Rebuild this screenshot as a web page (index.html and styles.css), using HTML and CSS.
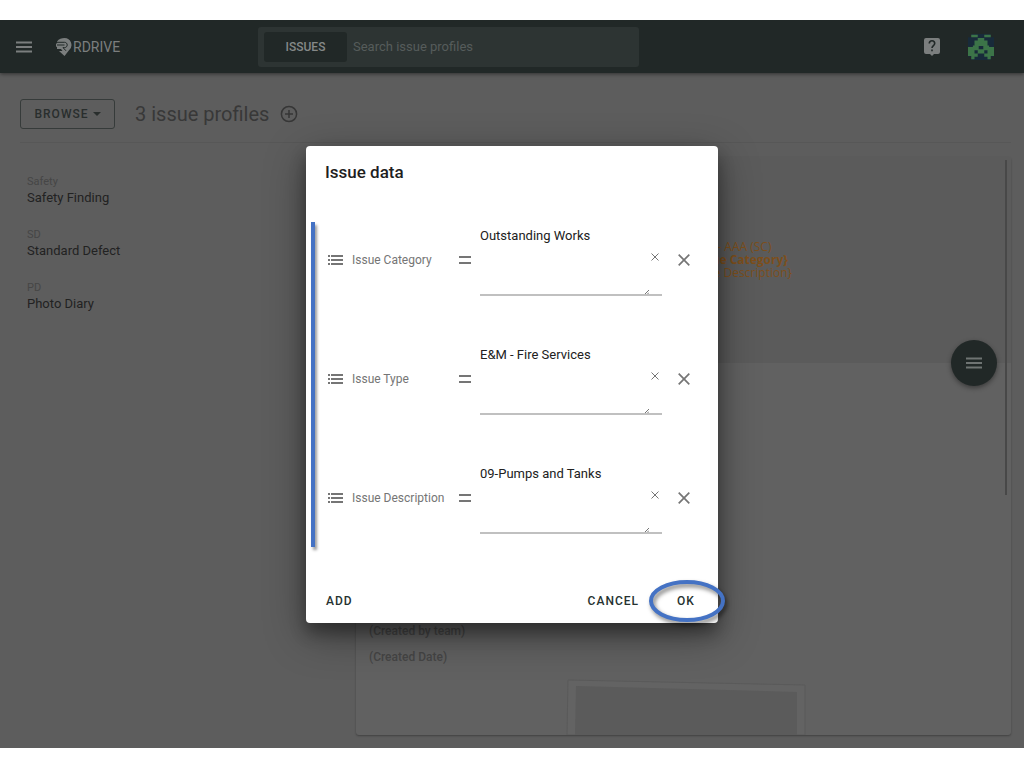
FILE: index.html
```html
<!DOCTYPE html>
<html lang="en">
<head>
    <meta charset="utf-8">
    <meta name="viewport" content="width=device-width, initial-scale=1">
    <title>RDrive - Issues</title>
    <link rel="stylesheet" href="styles.css">
</head>
<body>
    <div class="app">
        <header class="topbar">
            <div class="topbar-left">
                <button class="icon-btn" type="button" aria-label="Menu">
                    <svg width="16" height="12" viewBox="0 0 16 12"><path d="M0 1.500h16M0 6h16M0 10.500h16" stroke="currentColor" stroke-width="1.800"/></svg>
                </button>
                <a class="logo" href="#">
                    <svg width="16" height="18" viewBox="0 0 16 18">
                        <path d="M1 3.500C3 .8 5.500 0 8.500 0a7 7 0 0 1 4.500 12.300L8.500 18 3 13h3.500l-1.500-2H1V8.800H0V5.500h1z" fill="currentColor"/>
                        <path d="M0 4.300h8.500c3.600 0 3.600 5.300 0 5.300H7l3 3.200M1 7h7.500" fill="none" stroke="#212827" stroke-width="1"/>
                    </svg>
                    <span>RDRIVE</span>
                </a>
            </div>
            <form class="search">
                <button class="search-tab" type="button">ISSUES</button>
                <input class="search-input" type="text" placeholder="Search issue profiles" aria-label="Search issue profiles">
            </form>
            <div class="topbar-right">
                <button class="icon-btn" type="button" aria-label="Help">
                    <svg width="16" height="18" viewBox="0 0 16 18">
                        <path d="M2 0h12a2 2 0 0 1 2 2v12a2 2 0 0 1-2 2h-4l-2 2-2-2H2a2 2 0 0 1-2-2V2a2 2 0 0 1 2-2z" fill="currentColor"/>
                        <path d="M5.300 5.500c0-3.600 5.400-3.600 5.400 0 0 2-2.700 2.200-2.700 4.500M8 11.500v1.800" fill="none" stroke="#212827" stroke-width="1.600"/>
                    </svg>
                </button>
                <button class="icon-btn" type="button" aria-label="Account">
                    <svg width="26" height="26" viewBox="0 0 8 8">
                        <path d="M1 0h6v1h1v6H7v1H1V7H0V1h1z" fill="#182a3a"/>
                        <path d="M1 .2h2v.8H1zM5 .2h2v.8H5zM3 1.200h2V2h1v1.500h.5V4H8v2.800H7v1H6V7H5V6h1V5H5v1H3V5H2v1h1v1H2v.8H1v-1H0V4h1.500v-.5H2V2h1zM3.300 3.700v1h1.400v-1z" fill="#3c7448" fill-rule="evenodd"/>
                    </svg>
                </button>
            </div>
        </header>

        <main class="content">
            <div class="toolbar">
                <button class="browse" type="button">BROWSE
                    <svg width="8" height="4" viewBox="0 0 8 4"><path d="M0 0h8L4 4z" fill="currentColor"/></svg>
                </button>
                <h1 class="page-title">3 issue profiles</h1>
                <button class="icon-btn add-profile" type="button" aria-label="Add profile">
                    <svg width="18" height="18" viewBox="0 0 18 18" fill="none" stroke="currentColor" stroke-width="1.500"><circle cx="9" cy="9" r="7.600"/><path d="M9 5v8M5 9h8"/></svg>
                </button>
            </div>

            <div class="columns">
                <ul class="profiles">
                    <li><span>Safety</span><a href="#">Safety Finding</a></li>
                    <li><span>SD</span><a href="#">Standard Defect</a></li>
                    <li><span>PD</span><a href="#">Photo Diary</a></li>
                </ul>

                <section class="preview">
                    <div class="preview-head">
                        <p>II - AAA (SC)</p>
                        <p><b>{Issue Category}</b></p>
                        <p>{Issue Description}</p>
                    </div>
                    <div class="preview-body">
                        <p>(Created by team)</p>
                        <p>(Created Date)</p>
                        <svg class="photo" width="244" height="56" viewBox="0 0 244 56">
                            <path d="M4 1L241 6V56H3z" fill="#636363" stroke="#5a5a5a"/>
                            <path d="M12 7L233 13V56H11z" fill="#5b5b5b"/>
                        </svg>
                    </div>
                    <div class="scrollbar"></div>
                    <button class="fab" type="button" aria-label="Actions">
                        <svg width="16" height="12" viewBox="0 0 16 12"><path d="M0 1.500h16M0 6h16M0 10.500h16" stroke="currentColor" stroke-width="1.800"/></svg>
                    </button>
                </section>
            </div>
        </main>

        <div class="overlay">
            <div class="dialog" role="dialog" aria-labelledby="dialog-title">
                <h2 id="dialog-title" class="dialog-title">Issue data</h2>

                <div class="rows">
                    <div class="row">
                        <svg class="list-icon" width="15" height="10" viewBox="0 0 15 10"><path d="M0 1h2M0 5h2M0 9h2M3 1h12M3 5h12M3 9h12" stroke="currentColor" stroke-width="1.800"/></svg>
                        <label for="category">Issue Category</label>
                        <svg class="equals" width="12" height="8" viewBox="0 0 12 8"><path d="M0 1h12M0 7h12" stroke="currentColor" stroke-width="1.800"/></svg>
                        <div class="field">
                            <textarea id="category">Outstanding Works</textarea>
                            <button class="clear" type="button" aria-label="Clear"><svg width="8" height="8" viewBox="0 0 8 8"><path d="M.5.5l7 7M7.500.5l-7 7" stroke="currentColor"/></svg></button>
                            <svg class="grip" width="4" height="4" viewBox="0 0 4 4"><path d="M0 4l4-4M2.500 4L4 2.500" stroke="currentColor"/></svg>
                        </div>
                        <button class="remove" type="button" aria-label="Remove"><svg width="12" height="12" viewBox="0 0 12 12"><path d="M.7.7l10.600 10.600M11.300.7L.7 11.300" stroke="currentColor" stroke-width="1.700"/></svg></button>
                    </div>
                    <div class="row">
                        <svg class="list-icon" width="15" height="10" viewBox="0 0 15 10"><path d="M0 1h2M0 5h2M0 9h2M3 1h12M3 5h12M3 9h12" stroke="currentColor" stroke-width="1.800"/></svg>
                        <label for="type">Issue Type</label>
                        <svg class="equals" width="12" height="8" viewBox="0 0 12 8"><path d="M0 1h12M0 7h12" stroke="currentColor" stroke-width="1.800"/></svg>
                        <div class="field">
                            <textarea id="type">E&amp;M - Fire Services</textarea>
                            <button class="clear" type="button" aria-label="Clear"><svg width="8" height="8" viewBox="0 0 8 8"><path d="M.5.5l7 7M7.500.5l-7 7" stroke="currentColor"/></svg></button>
                            <svg class="grip" width="4" height="4" viewBox="0 0 4 4"><path d="M0 4l4-4M2.500 4L4 2.500" stroke="currentColor"/></svg>
                        </div>
                        <button class="remove" type="button" aria-label="Remove"><svg width="12" height="12" viewBox="0 0 12 12"><path d="M.7.7l10.600 10.600M11.300.7L.7 11.300" stroke="currentColor" stroke-width="1.700"/></svg></button>
                    </div>
                    <div class="row">
                        <svg class="list-icon" width="15" height="10" viewBox="0 0 15 10"><path d="M0 1h2M0 5h2M0 9h2M3 1h12M3 5h12M3 9h12" stroke="currentColor" stroke-width="1.800"/></svg>
                        <label for="description">Issue Description</label>
                        <svg class="equals" width="12" height="8" viewBox="0 0 12 8"><path d="M0 1h12M0 7h12" stroke="currentColor" stroke-width="1.800"/></svg>
                        <div class="field">
                            <textarea id="description">09-Pumps and Tanks</textarea>
                            <button class="clear" type="button" aria-label="Clear"><svg width="8" height="8" viewBox="0 0 8 8"><path d="M.5.5l7 7M7.500.5l-7 7" stroke="currentColor"/></svg></button>
                            <svg class="grip" width="4" height="4" viewBox="0 0 4 4"><path d="M0 4l4-4M2.500 4L4 2.500" stroke="currentColor"/></svg>
                        </div>
                        <button class="remove" type="button" aria-label="Remove"><svg width="12" height="12" viewBox="0 0 12 12"><path d="M.7.7l10.600 10.600M11.300.7L.7 11.300" stroke="currentColor" stroke-width="1.700"/></svg></button>
                    </div>
                    <div class="mark-bar"></div>
                </div>

                <div class="actions">
                    <button class="text-btn" type="button">ADD</button>
                    <button class="text-btn cancel" type="button">CANCEL</button>
                    <button class="text-btn ok" type="button">OK
                        <svg class="mark-ring" width="78" height="44" viewBox="0 0 78 44"><ellipse cx="39" cy="22" rx="36" ry="19" fill="none" stroke="#4472c4" stroke-width="4"/></svg>
                    </button>
                </div>
            </div>
        </div>
    </div>
</body>
</html>
```

FILE: styles.css
```css
* {
    box-sizing: border-box;
    margin: 0;
    padding: 0;
}

body {
    padding: 20px 0;
    background: #fff;
    font-family: Roboto, "Liberation Sans", sans-serif;
    font-size: 13px;
    line-height: 16px;
}

button, input, textarea {
    font: inherit;
    color: inherit;
    border: 0;
    background: none;
}

a {
    color: inherit;
    text-decoration: none;
}

svg {
    display: block;
}

.app {
    position: relative;
    display: flex;
    flex-direction: column;
    height: calc(100vh - 40px);
    min-height: 560px;
    background: #5d5d5d;
    overflow: hidden;
}

/* top bar */

.topbar {
    display: flex;
    align-items: center;
    flex: none;
    height: 53px;
    padding: 0 30px 0 16px;
    background: #212827;
    color: #7b7e7e;
    box-shadow: 0 1px 4px rgba(0, 0, 0, 0.5);
}

.topbar-left {
    display: flex;
    align-items: center;
    gap: 24px;
    flex: 0 0 242px;
}

.logo {
    display: flex;
    align-items: center;
    gap: 1px;
    font-size: 14px;
    color: #7b7e7e;
}

.search {
    display: flex;
    flex: 0 1 381px;
    height: 40px;
    padding: 5px 6px;
    border-radius: 3px;
    background: #2d3433;
}

.search-tab {
    width: 83px;
    border-radius: 3px;
    background: #212827;
    font-size: 12px;
    font-weight: 500;
    color: #858888;
}

.search-input {
    flex: 1;
    min-width: 0;
    padding: 0 6px;
}

.search-input::placeholder {
    color: #565c5b;
}

.topbar-right {
    display: flex;
    align-items: center;
    gap: 28px;
    margin-left: auto;
}

/* page */

.content {
    display: flex;
    flex-direction: column;
    flex: 1;
    min-height: 0;
    padding: 0 13px 13px 20px;
}

.toolbar {
    display: flex;
    align-items: center;
    flex: none;
    height: 70px;
    padding-top: 12px;
    border-bottom: 1px solid #575757;
    color: #363636;
}

.browse {
    display: flex;
    align-items: center;
    justify-content: center;
    gap: 4px;
    width: 95px;
    height: 30px;
    margin-right: 20px;
    border: 1px solid #363b3a;
    border-radius: 3px;
    font-size: 12px;
    font-weight: 500;
    letter-spacing: 1px;
    color: #292e2d;
}

.page-title {
    margin-right: 11px;
    font-size: 20px;
    font-weight: 400;
    line-height: 24px;
    color: #383838;
}

.columns {
    display: flex;
    flex: 1;
    min-height: 0;
    padding-top: 14px;
}

.profiles {
    flex: 0 0 336px;
    padding: 17px 7px;
    list-style: none;
    color: #222;
}

.profiles li {
    display: flex;
    flex-direction: column;
    height: 53px;
}

.profiles span {
    font-size: 11px;
    color: #464646;
}

.preview {
    position: relative;
    display: flex;
    flex-direction: column;
    flex: 1;
    border-radius: 3px;
    background: #616161;
    box-shadow: 0 1px 2px rgba(0, 0, 0, 0.3);
}

.preview-head {
    display: flex;
    flex-direction: column;
    justify-content: center;
    height: 206px;
    padding: 0 0 2px 112px;
    background: #5b5b5b;
    font-family: "Open Sans", sans-serif;
    font-size: 12px;
    line-height: 13px;
    text-align: center;
    color: #7d4f1b;
}

.preview-body {
    position: relative;
    display: flex;
    flex-direction: column;
    justify-content: flex-end;
    flex: 1;
    gap: 10px;
    padding: 0 13px 70px;
    font-size: 12px;
    font-weight: 500;
    color: #464646;
}

.photo {
    position: absolute;
    bottom: 0;
    left: 208px;
}

.scrollbar {
    position: absolute;
    top: 3px;
    right: 4px;
    width: 2px;
    height: 335px;
    background: #484848;
}

.fab {
    position: absolute;
    top: 183px;
    right: 14px;
    display: flex;
    align-items: center;
    justify-content: center;
    width: 46px;
    height: 46px;
    border-radius: 50%;
    background: #212827;
    color: #6f7473;
    box-shadow: 0 2px 5px rgba(0, 0, 0, 0.4);
}

/* dialog */

.overlay {
    position: absolute;
    inset: 0;
    display: flex;
    align-items: center;
    justify-content: center;
}

.dialog {
    width: 412px;
    max-width: 100%;
    border-radius: 4px;
    background: #fff;
    box-shadow: 0 10px 16px rgba(0, 0, 0, 0.3), 0 12px 40px rgba(0, 0, 0, 0.4);
}

.dialog-title {
    padding: 15px 19px 17px;
    font-size: 17px;
    font-weight: 500;
    line-height: 22px;
    color: #1f1f1f;
}

.rows {
    position: relative;
    color: #757575;
}

.row {
    display: flex;
    align-items: center;
    height: 119px;
    padding: 2px 28px 0 22px;
}

.row label {
    flex: 1;
    margin-left: 9px;
    font-size: 12px;
}

.field {
    position: relative;
    display: flex;
    align-items: center;
    width: 182px;
    height: 71px;
    margin: 0 16px 0 9px;
    border-bottom: 2px solid #c0c0c0;
}

.field textarea {
    flex: 1;
    min-width: 0;
    height: 100%;
    padding: 3px 0;
    resize: none;
    outline: 0;
    overflow: hidden;
    color: #212121;
}

.clear {
    padding: 0 3px 4px;
}

.grip {
    position: absolute;
    right: 13px;
    bottom: 0;
}

.actions {
    display: flex;
    align-items: center;
    height: 66px;
    padding: 23px 3px 0 12px;
}

.text-btn {
    position: relative;
    height: 32px;
    padding: 0 8px;
    font-size: 12px;
    font-weight: 500;
    letter-spacing: 1px;
    color: #263230;
}

.cancel {
    margin-left: auto;
}

.ok {
    width: 58px;
    margin-left: 10px;
}

/* highlights drawn over the dialog */

.mark-bar {
    position: absolute;
    top: 22px;
    left: 5px;
    width: 4px;
    height: 325px;
    background: #4472c4;
    box-shadow: 2px 3px 3px rgba(0, 0, 0, 0.4);
}

.mark-ring {
    position: absolute;
    top: -6px;
    left: -9px;
    filter: drop-shadow(2px 3px 2px rgba(0, 0, 0, 0.5));
}
```
